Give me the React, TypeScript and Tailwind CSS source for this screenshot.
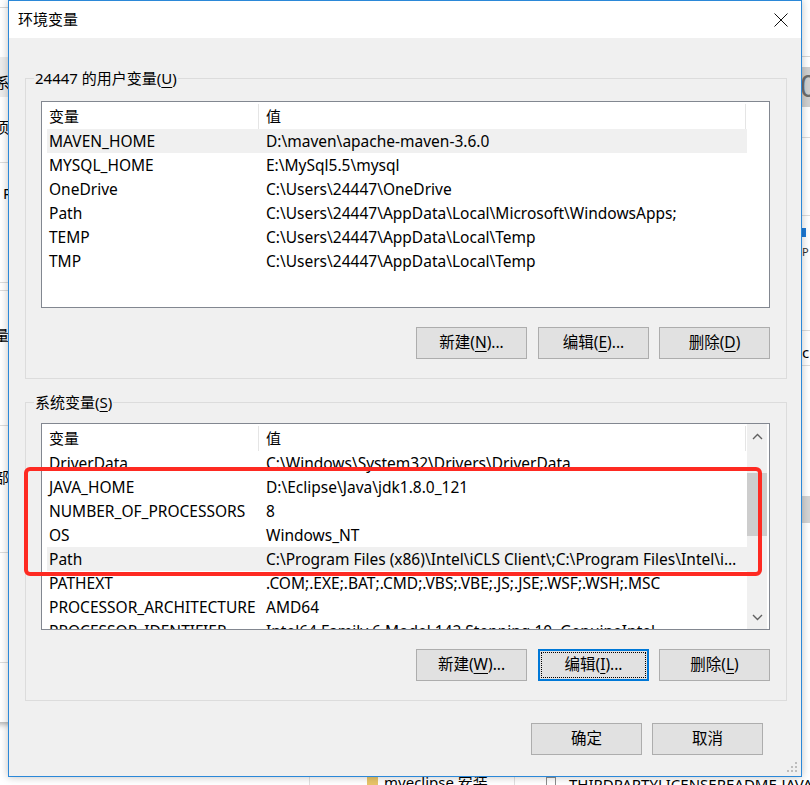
import React from "react";

type Row = { name: string; value: string; selected?: boolean };

const userVars: Row[] = [
  { name: "MAVEN_HOME", value: "D:\\maven\\apache-maven-3.6.0", selected: true },
  { name: "MYSQL_HOME", value: "E:\\MySql5.5\\mysql" },
  { name: "OneDrive", value: "C:\\Users\\24447\\OneDrive" },
  { name: "Path", value: "C:\\Users\\24447\\AppData\\Local\\Microsoft\\WindowsApps;" },
  { name: "TEMP", value: "C:\\Users\\24447\\AppData\\Local\\Temp" },
  { name: "TMP", value: "C:\\Users\\24447\\AppData\\Local\\Temp" },
];

const sysVars: Row[] = [
  { name: "DriverData", value: "C:\\Windows\\System32\\Drivers\\DriverData" },
  { name: "JAVA_HOME", value: "D:\\Eclipse\\Java\\jdk1.8.0_121" },
  { name: "NUMBER_OF_PROCESSORS", value: "8" },
  { name: "OS", value: "Windows_NT" },
  {
    name: "Path",
    value:
      "C:\\Program Files (x86)\\Intel\\iCLS Client\\;C:\\Program Files\\Intel\\iCLS Client\\;C:\\Windows\\system32",
    selected: true,
  },
  { name: "PATHEXT", value: ".COM;.EXE;.BAT;.CMD;.VBS;.VBE;.JS;.JSE;.WSF;.WSH;.MSC" },
  { name: "PROCESSOR_ARCHITECTURE", value: "AMD64" },
  { name: "PROCESSOR_IDENTIFIER", value: "Intel64 Family 6 Model 142 Stepping 10, GenuineIntel" },
];

function Btn({
  pre,
  k,
  post,
  focused,
  className = "",
}: {
  pre: string;
  k?: string;
  post?: string;
  focused?: boolean;
  className?: string;
}) {
  return (
    <div
      className={
        "relative w-[111px] h-[32px] flex items-center justify-center bg-[#e1e1e1] text-[15.5px] text-black " +
        (focused ? "border-2 border-[#0078d7] " : "border border-[#adadad] ") +
        className
      }
    >
      {focused && <div className="absolute inset-[1px] border border-dotted border-black" />}
      <span>
        {pre}
        {k && (
          <>
            (<span className="underline underline-offset-[3px] decoration-1">{k}</span>)
          </>
        )}
        {post}
      </span>
    </div>
  );
}

function ListView({ rows, scroll }: { rows: Row[]; scroll?: boolean }) {
  return (
    <div className="w-[729px] h-[207px] border border-[#828790] bg-white flex overflow-hidden">
      <div className="w-[705px] h-full pl-[5px] overflow-hidden">
        <div className="flex h-[27px] items-center text-[15px]">
          <div className="w-[212px] h-[25px] mt-[1px] border-r border-[#e5e5e5] pl-[2px] flex items-center">
            变量
          </div>
          <div className="w-[487px] h-[25px] mt-[1px] border-r border-[#e5e5e5] pl-[7px] flex items-center">
            值
          </div>
        </div>
        {rows.map((r, i) => (
          <div
            key={i}
            className={
              "flex h-[24px] pt-[2px] items-center text-[15.5px] " + (r.selected ? "bg-[#f0f0f0]" : "")
            }
          >
            <div className="w-[212px] pl-[2px] whitespace-nowrap overflow-hidden">{r.name}</div>
            <div className="w-[487px] pl-[7px] pr-[8px] whitespace-nowrap overflow-hidden text-ellipsis">
              {r.value}
            </div>
          </div>
        ))}
      </div>
      {scroll && (
        <div className="w-[20px] h-full bg-[#f0f0f0] flex flex-col">
          <div className="h-[24px] flex items-center justify-center">
            <svg width="11" height="7" viewBox="0 0 11 7">
              <polyline points="1,6 5.5,1.5 10,6" fill="none" stroke="#606060" strokeWidth="1.4" />
            </svg>
          </div>
          <div className="h-[25px]" />
          <div className="h-[63px] bg-[#cdcdcd]" />
          <div className="flex-1" />
          <div className="h-[24px] flex items-center justify-center">
            <svg width="11" height="7" viewBox="0 0 11 7">
              <polyline points="1,1 5.5,5.5 10,1" fill="none" stroke="#606060" strokeWidth="1.4" />
            </svg>
          </div>
        </div>
      )}
    </div>
  );
}

function Group({
  label,
  k,
  children,
  className = "",
}: {
  label: string;
  k: string;
  children: React.ReactNode;
  className?: string;
}) {
  return (
    <div className={"relative border border-[#dcdcdc] px-[15px] " + className}>
      <div className="absolute -top-[11px] left-[8px] px-[1px] bg-[#f0f0f0] leading-[20px] text-[15px]">
        {label}(<span className="underline underline-offset-[3px] decoration-1">{k}</span>)
      </div>
      {children}
    </div>
  );
}

export default function App() {
  return (
    <div
      className="relative w-[810px] h-[785px] overflow-hidden bg-white text-black text-[15px]"
      style={{ fontFamily: '"Noto Sans", "Noto Sans CJK SC", sans-serif' }}
    >
      {/* background window on the left */}
      <div className="absolute left-[-300px] top-0 w-[330px] h-[722px] bg-white shadow-[0_2px_6px_rgba(0,0,0,0.35)] flex flex-col text-[15px] leading-[20px]">
        <div className="h-[8px] border-b border-[#d6d6d6] shrink-0" />
        <div className="h-[49px] shrink-0" />
        <div className="h-[40px] bg-[#ececec] pt-[15px] pl-[295px] shrink-0">系统</div>
        <div className="h-[66px] border-b border-[#dcdcdc] pl-[294px] pt-[20px] shrink-0">项</div>
        <div className="h-[120px] border-b border-[#dcdcdc] pl-[303px] pt-[20px] shrink-0">P</div>
        <div className="h-[8px] border-b border-[#dcdcdc] shrink-0" />
        <div className="h-[135px] border-b border-[#dcdcdc] pl-[294px] pt-[34px] shrink-0">量</div>
        <div className="h-[127px] border-b border-[#dcdcdc] pl-[294px] pt-[41px] shrink-0">部</div>
        <div className="h-[110px] border-b border-[#dcdcdc] shrink-0" />
        <div className="flex-1" />
      </div>

      {/* background window on the right */}
      <div className="absolute left-[790px] top-0 w-[300px] h-[785px] bg-white flex flex-col pl-[12px]">
        <div className="h-[57px] border-b border-[#d6d6d6] shrink-0" />
        <div className="h-[10px] shrink-0" />
        <div className="h-[40px] bg-[#cfcfcf] -ml-[12px] pl-[10px] text-[30px] leading-[38px] text-[#6d6d6d] shrink-0">
          0
        </div>
        <div className="h-[31px] border-b border-[#dcdcdc] shrink-0" />
        <div className="h-[78px] border-b border-[#dcdcdc] shrink-0" />
        <div className="h-[115px] border-b border-[#dcdcdc] flex flex-col gap-[9px] pt-[12px] shrink-0">
          <div className="w-[4px] h-[9px] bg-[#1e7ad6]" />
          <div className="text-[11px] leading-[12px] text-[#333]">P</div>
        </div>
        <div className="h-[35px] border-b border-[#dcdcdc] pt-[11px] text-[15px] leading-[20px] shrink-0">
          c
        </div>
        <div className="h-[130px] shrink-0" />
        <div className="h-[27px] bg-[#d4d4d4] -ml-[12px] shrink-0" />
      </div>

      {/* background explorer strip at the bottom */}
      <div className="absolute left-0 top-[760px] w-[810px] h-[25px] bg-white flex items-start text-[15px] leading-[20px]">
        <div className="w-[310px] h-full border-r border-[#e0e0e0] shrink-0" />
        <div className="w-[57px] shrink-0" />
        <div className="w-[11px] h-[9px] mt-[16px] bg-[#e8c468] shrink-0" />
        <div className="w-[117px] pl-[6px] pt-[12px] whitespace-nowrap shrink-0">myeclipse 安装</div>
        <div className="w-[20px] h-full border-r border-[#e0e0e0] shrink-0" />
        <div className="w-[31px] shrink-0" />
        <div className="w-[10px] h-[8px] mt-[17px] border-t border-x border-[#8c8c8c] shrink-0" />
        <div className="pl-[13px] pt-[14px] whitespace-nowrap">THIRDPARTYLICENSEREADME-JAVAFX.txt</div>
      </div>

      {/* dialog */}
      <div className="absolute left-[8px] top-0 w-[794px] h-[777px] border border-[#2b88d8] bg-[#f0f0f0] flex flex-col shadow-[0_0_8px_rgba(0,0,0,0.25)]">
        <div className="h-[37px] bg-white flex items-center pl-[9px] shrink-0">
          <span className="text-[15px]">环境变量</span>
          <div className="ml-auto w-[40px] h-full flex items-center justify-center">
            <svg width="14" height="14" viewBox="0 0 14 14">
              <line x1="0.5" y1="0.5" x2="13.5" y2="13.5" stroke="#111" strokeWidth="1" />
              <line x1="13.5" y1="0.5" x2="0.5" y2="13.5" stroke="#111" strokeWidth="1" />
            </svg>
          </div>
        </div>

        <div className="flex flex-col pl-[16px] pr-[14px] pt-[40px]">
          <Group label="24447 的用户变量" k="U" className="pt-[22px] pb-[19px]">
            <ListView rows={userVars} />
            <div className="flex justify-end gap-[10px] mt-[19px] pr-[1px]">
              <Btn pre="新建" k="N" post="..." className="mr-[1px]" />
              <Btn pre="编辑" k="E" post="..." />
              <Btn pre="删除" k="D" />
            </div>
          </Group>

          <Group label="系统变量" k="S" className="mt-[23px] pt-[20px] pb-[19px]">
            <ListView rows={sysVars} scroll />
            <div className="flex justify-end gap-[10px] mt-[19px] pr-[1px]">
              <Btn pre="新建" k="W" post="..." className="mr-[1px]" />
              <Btn pre="编辑" k="I" post="..." focused />
              <Btn pre="删除" k="L" />
            </div>
          </Group>

          <div className="flex justify-end gap-[10px] mt-[22px] pr-[24px]">
            <Btn pre="确定" />
            <Btn pre="取消" />
          </div>
        </div>

        {/* resize grip */}
        <svg className="absolute right-[3px] bottom-[3px]" width="11" height="11" viewBox="0 0 11 11">
          <rect x="8" y="0" width="2" height="2" fill="#bdbdbd" />
          <rect x="4" y="4" width="2" height="2" fill="#bdbdbd" />
          <rect x="8" y="4" width="2" height="2" fill="#bdbdbd" />
          <rect x="0" y="8" width="2" height="2" fill="#bdbdbd" />
          <rect x="4" y="8" width="2" height="2" fill="#bdbdbd" />
          <rect x="8" y="8" width="2" height="2" fill="#bdbdbd" />
        </svg>
      </div>

      {/* red annotation box */}
      <div className="absolute left-[24px] top-[467px] w-[738px] h-[109px] border-4 border-[#fe2a22] rounded-[6px]" />
    </div>
  );
}
